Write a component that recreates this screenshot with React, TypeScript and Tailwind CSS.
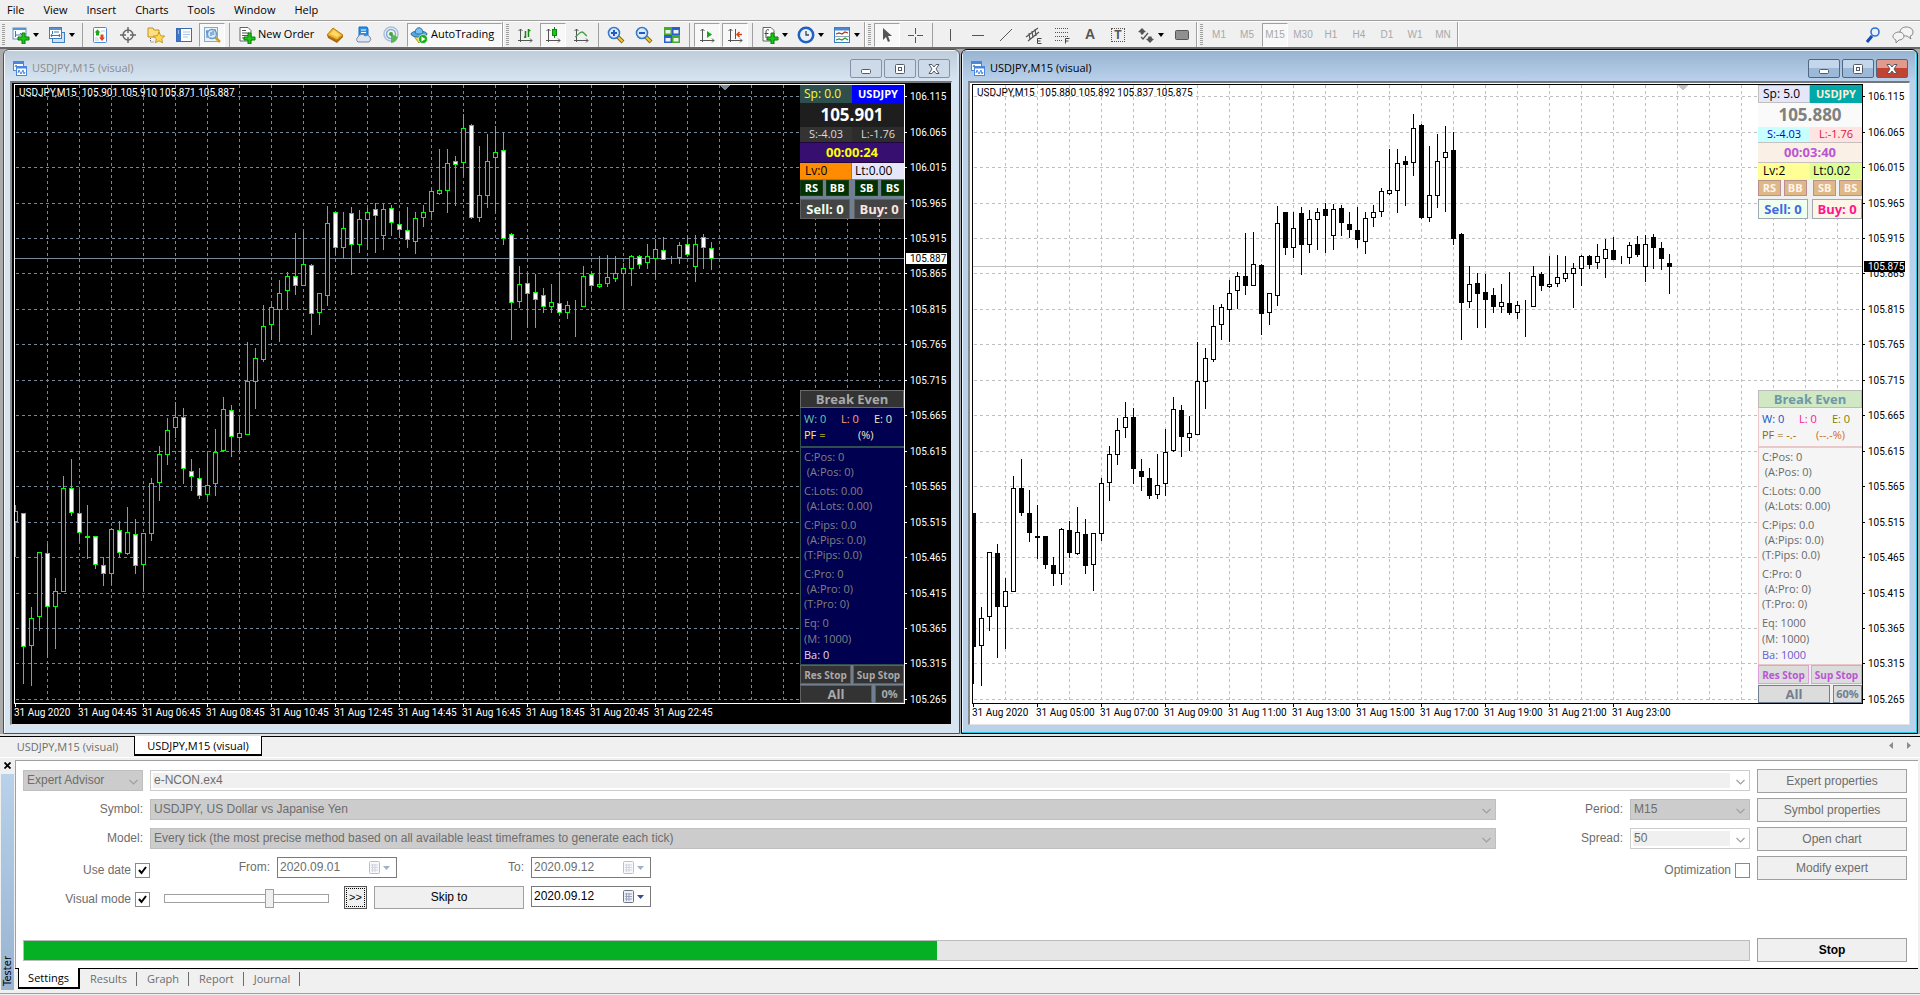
import React from 'react';
import clsx from 'clsx';

// high, body top, body bottom, low, 1 = bullish / 0 = bearish
type Candle = [number, number, number, number, 0 | 1];

const CANDLES: Candle[] = [
  [505, 511, 522, 557, 1], [513, 513, 647, 684, 0], [607, 618, 646, 686, 1], [552, 552, 617, 631, 1],
  [544, 553, 607, 658, 0], [578, 591, 607, 649, 1], [476, 488, 592, 592, 1], [459, 488, 513, 516, 0],
  [490, 513, 533, 542, 0], [505, 536, 538, 559, 1], [536, 536, 565, 569, 0], [557, 565, 574, 586, 0],
  [528, 529, 574, 585, 1], [521, 530, 553, 558, 0], [507, 532, 554, 555, 1], [519, 534, 566, 574, 0],
  [533, 533, 565, 591, 1], [478, 483, 534, 541, 1], [446, 454, 483, 501, 1], [418, 430, 455, 465, 1],
  [402, 417, 428, 438, 1], [408, 417, 469, 484, 0], [459, 471, 477, 491, 0], [468, 478, 496, 499, 0],
  [454, 485, 495, 499, 1], [429, 452, 484, 496, 1], [397, 409, 451, 452, 1], [405, 410, 437, 457, 0],
  [416, 433, 438, 451, 1], [342, 381, 435, 435, 1], [348, 358, 382, 409, 1], [305, 326, 360, 362, 1],
  [304, 307, 325, 340, 1], [280, 293, 310, 342, 1], [272, 276, 291, 309, 1], [233, 276, 286, 295, 0],
  [232, 264, 286, 286, 1], [264, 265, 314, 335, 0], [293, 293, 313, 325, 1], [206, 223, 296, 306, 1],
  [212, 212, 248, 255, 0], [212, 228, 248, 258, 1], [207, 213, 245, 275, 0], [210, 219, 245, 253, 1],
  [208, 212, 220, 250, 1], [203, 209, 216, 253, 0], [204, 209, 236, 250, 1], [205, 208, 223, 236, 0],
  [212, 224, 230, 238, 0], [207, 230, 240, 248, 0], [212, 218, 242, 254, 1], [205, 212, 218, 227, 1],
  [188, 191, 212, 217, 1], [149, 190, 194, 195, 1], [149, 163, 191, 213, 1], [156, 161, 165, 206, 0],
  [114, 128, 163, 176, 1], [124, 125, 218, 219, 0], [146, 195, 218, 222, 1], [134, 161, 196, 208, 1],
  [126, 152, 158, 212, 1], [132, 150, 239, 245, 0], [233, 234, 303, 340, 0], [266, 284, 302, 308, 1],
  [273, 283, 294, 328, 0], [274, 292, 300, 328, 0], [288, 295, 307, 313, 0], [284, 302, 307, 313, 1],
  [272, 303, 313, 315, 0], [301, 305, 313, 319, 1], [300, 305, 306, 337, 1], [266, 276, 307, 307, 1],
  [272, 274, 286, 291, 0], [256, 284, 287, 288, 1], [255, 277, 284, 287, 1], [256, 273, 279, 282, 1],
  [263, 268, 274, 308, 1], [255, 256, 269, 286, 1], [255, 256, 265, 269, 0], [244, 256, 263, 269, 1],
  [239, 249, 259, 278, 1], [237, 250, 260, 260, 0], [256, 259, 260, 264, 1], [242, 245, 258, 264, 1],
  [236, 244, 255, 257, 0], [235, 244, 267, 282, 1], [234, 237, 248, 269, 0], [242, 248, 259, 270, 0],
];

const LEVELS: [number, string][] = [
  [96, '106.115'], [132, '106.065'], [167, '106.015'], [203, '105.965'], [238, '105.915'], [273, '105.865'],
  [309, '105.815'], [344, '105.765'], [380, '105.715'], [415, '105.665'], [451, '105.615'], [486, '105.565'],
  [522, '105.515'], [557, '105.465'], [593, '105.415'], [628, '105.365'], [663, '105.315'], [699, '105.265'],
];

const COLUMNS = Array.from({ length: 27 }, (_, i) => 47 + i * 32);

const CHART_FONT = "text-[10px] font-['Roboto',sans-serif]";

interface Theme {
  dark: boolean;
  bg: string;
  fg: string;
  grid: string;
  line: string;
  up: string;
  down: string;
}

const DARK: Theme = { dark: true, bg: '#000000', fg: '#ffffff', grid: '#778899', line: '#00ff00', up: '#000000', down: '#ffffff' };
const LIGHT: Theme = { dark: false, bg: '#ffffff', fg: '#000000', grid: '#c0c0c0', line: '#000000', up: '#ffffff', down: '#000000' };

const Plot: React.FC<{ theme: Theme; candles: Candle[]; bid: number; times: string[]; title: string }> = ({
  theme,
  candles,
  bid,
  times,
  title,
}) => (
  <svg className="block h-full w-full" shapeRendering="crispEdges">
    <g transform="translate(-12 -83)">
      <g stroke={theme.grid} strokeDasharray="3 3">
        {COLUMNS.map((x) => (
          <line key={x} x1={x + 0.5} x2={x + 0.5} y1="85" y2="703" />
        ))}
        {LEVELS.map(([y]) => (
          <line key={y} x1="16" x2="904" y1={y + 0.5} y2={y + 0.5} />
        ))}
      </g>
      <line x1="15" x2="904" y1={bid + 0.5} y2={bid + 0.5} stroke={theme.grid} />
      <path d="M719 85h11l-5 5h-1z" fill={theme.grid} />
      <g stroke={theme.line}>
        {candles.map(([high, top, bottom, low, up], i) => {
          const x = 15 + i * 8;
          return (
            <g key={i}>
              <line x1={x + 0.5} x2={x + 0.5} y1={high} y2={low} />
              <rect x={x - 1.5} y={top + 0.5} width="4" height={bottom - top - 1} fill={up ? theme.up : theme.down} />
            </g>
          );
        })}
      </g>
      <rect x="12" y="83" width="2" height="621" fill={theme.bg} />
      <path d="M904.5 84.5H14.5V703.5H904.5Z" fill="none" stroke={theme.fg} />
      {times.map((time, i) => (
        <g key={time}>
          <line x1={15.5 + i * 64} x2={15.5 + i * 64} y1="704" y2="707" stroke={theme.fg} />
          <text x={14 + i * 64} y="716" fill={theme.fg} className={CHART_FONT}>
            {time}
          </text>
        </g>
      ))}
      <text x="19" y="96" fill={theme.fg} className={clsx('whitespace-pre', CHART_FONT)}>
        {title}
      </text>
    </g>
  </svg>
);

const PriceScale: React.FC<{ theme: Theme; bid: number; price: string }> = ({ theme, bid, price }) => (
  <svg className="block h-full w-[46px] shrink-0" shapeRendering="crispEdges">
    <g transform="translate(-905 -83)" className={CHART_FONT}>
      {LEVELS.map(([y, label]) => (
        <g key={label}>
          <line x1="905" x2="907" y1={y + 0.5} y2={y + 0.5} stroke={theme.fg} />
          <text x="910" y={y + 4} fill={theme.fg}>
            {label}
          </text>
        </g>
      ))}
      <rect x="906" y={bid - 5} width="41" height="11" fill={theme.fg} />
      <text x="910" y={bid + 4} fill={theme.bg}>
        {price}
      </text>
    </g>
  </svg>
);

interface Quote {
  spread: string;
  price: string;
  timer: string;
  level: string;
  lots: string;
}

const QuotePanel: React.FC<{ dark: boolean; quote: Quote }> = ({ dark, quote }) => {
  const small = clsx(
    'h-4 w-[23px] border text-[11px] leading-[14px] font-bold',
    dark ? 'border-[#1a3a1a] bg-[#003300] text-white' : 'border-[#bc8f8f] bg-[#deb887] text-[#fff5ee]',
  );
  return (
    <div className={clsx('absolute top-[2px] right-px w-[104px]', dark ? 'bg-[#708090]' : 'bg-[#f0f0f0]')}>
      <div className="flex h-[18px] text-[12px] leading-[18px]">
        <span className={clsx('w-[52px] pl-1', dark ? 'bg-[#2f4f4f] text-[#ffff00]' : 'border border-[#c0c0c0] bg-[#e6e6fa] leading-4 text-black')}>
          Sp: {quote.spread}
        </span>
        <span className={clsx('w-[52px] text-center text-[11px] font-bold', dark ? 'bg-[#0000ff] text-white' : 'bg-[#00a9a9] text-[#ffefd5]')}>
          USDJPY
        </span>
      </div>
      <div className={clsx('h-6 text-center text-[17px] leading-6 font-bold', dark ? 'bg-[#1e1e1e] text-white' : 'bg-[#fafafa] text-[#808080]')}>
        {quote.price}
      </div>
      <div className="flex h-[15px] text-center text-[11px] leading-[14px]">
        <span className={clsx('w-[52px]', dark ? 'bg-[#333333] text-[#dcdcdc]' : 'bg-[#c8ffff] text-[#0000cd]')}>S:-4.03</span>
        <span className={clsx('w-[52px]', dark ? 'bg-[#2c2c2c] text-[#dcdcdc]' : 'bg-[#ffe4e1] text-[#dc143c]')}>L:-1.76</span>
      </div>
      <div
        className={clsx(
          'h-[21px] border-y text-center text-[13px] leading-[19px] font-bold',
          dark ? 'border-[#20053f] bg-[#360f70] text-[#ffff00]' : 'border-[#c8c0c0] bg-[#faf0e6] text-[#ba55d3]',
        )}
      >
        {quote.timer}
      </div>
      <div className="flex h-4 text-[12px] leading-4 text-black">
        <span className={clsx('w-[51px] pl-[5px]', dark ? 'bg-[#ff8c00]' : 'bg-[#ffff96]')}>Lv:{quote.level}</span>
        <span className={clsx('ml-px w-[52px] pl-[3px]', dark ? 'bg-[#e6e6fa]' : 'bg-[#dfff96]')}>Lt:{quote.lots}</span>
      </div>
      <div className="flex h-5 justify-between pt-px">
        <button className={small}>RS</button>
        <button className={small}>BB</button>
        <span className="w-px" />
        <button className={small}>SB</button>
        <button className={small}>BS</button>
      </div>
      <div className="flex h-5 justify-between text-[13px] leading-[18px] font-bold">
        <button className={clsx('h-5 w-[50px] border', dark ? 'border-[#606060] bg-[#444444] text-[#f0fff0]' : 'border-[#a0a8b0] bg-[#f0fff0] text-[#4169e1]')}>
          Sell: 0
        </button>
        <button className={clsx('h-5 w-[50px] border', dark ? 'border-[#606060] bg-[#444444] text-[#ffe4e1]' : 'border-[#a0a8b0] bg-[#fff5e6] text-[#ff1493]')}>
          Buy: 0
        </button>
      </div>
    </div>
  );
};

const STATS = [
  ['C:Pos: 0', ' (A:Pos: 0)'],
  ['C:Lots: 0.00', ' (A:Lots: 0.00)'],
  ['C:Pips: 0.0', ' (A:Pips: 0.0)', '(T:Pips: 0.0)'],
  ['C:Pro: 0', ' (A:Pro: 0)', '(T:Pro: 0)'],
];

const StatsPanel: React.FC<{ dark: boolean }> = ({ dark }) => {
  const stop = clsx(
    'h-[19px] w-[51px] border text-[10px] leading-[16px] font-bold whitespace-nowrap',
    dark ? 'border-[#606060] bg-[#333333] text-[#a9a9a9]' : 'border-[#dda0dd] bg-[#dcdcdc] text-[#ba55d3]',
  );
  const foot = dark ? 'border-[#606060] bg-[#333333] text-[#a9a9a9]' : 'border-[#708090] bg-[#dcdcdc] text-[#708090]';
  return (
    <div className={clsx('absolute top-[307px] right-px w-[104px]', dark ? 'bg-[#708090]' : 'bg-[#f0f0f0]')}>
      <button
        className={clsx(
          'block h-[18px] w-full border text-[13px] leading-4 font-bold',
          dark ? 'border-[#696969] bg-[#333333] text-[#a9a9a9]' : 'border-[#bcbcbc] bg-[#d0e8c4] text-[#6c98a8]',
        )}
      >
        Break Even
      </button>
      <div
        className={clsx(
          'h-[257px] border-b border-l pl-[3px] text-[11px] leading-[15px] whitespace-pre',
          dark ? 'border-[#2f4f4f] bg-[#000050] text-[#808080]' : 'border-[#e8c8c8] bg-[#f5f5f5] text-[#696969]',
        )}
      >
        <div className={clsx('-ml-[3px] h-[40px] border-b-2 pt-[3px] pl-[3px]', dark ? 'border-[#2f4f4f]' : 'border-[#e8c8c8]')}>
          <div className="flex">
            <span className={clsx('w-[37px]', dark ? 'text-[#66cdaa]' : 'text-[#1450c8]')}>W: 0</span>
            <span className={clsx('w-[33px]', dark ? 'text-[#ffa07a]' : 'text-[#ff1493]')}>L: 0</span>
            <span className={dark ? 'text-[#eee8cd]' : 'text-[#808000]'}>E: 0</span>
          </div>
          <div className="flex pt-px">
            <span className={clsx('w-[54px]', dark ? 'text-[#ffff00]' : 'text-[#966400]')}>{dark ? 'PF =' : 'PF = -.-'}</span>
            <span className={dark ? 'text-[#f0e6c8]' : 'text-[#d2691e]'}>{dark ? '(%)' : '(--.-%)'}</span>
          </div>
        </div>
        <div className="flex flex-col gap-1 pt-px">
          {STATS.map((group) => (
            <div key={group[0]}>
              {group.map((line) => (
                <p key={line}>{line}</p>
              ))}
            </div>
          ))}
          <div className="leading-4">
            <p>Eq: {dark ? '0' : '1000'}</p>
            <p>(M: 1000)</p>
            <p className={dark ? 'text-[#e6d8f0]' : 'text-[#6a5acd]'}>Ba: {dark ? '0' : '1000'}</p>
          </div>
        </div>
      </div>
      <div className="flex h-5 justify-between">
        <button className={stop}>Res Stop</button>
        <button className={stop}>Sup Stop</button>
      </div>
      <div className="flex h-[18px] justify-between leading-4 font-bold">
        <button className={clsx('h-[18px] w-[72px] border text-[13px]', foot)}>All</button>
        <button className={clsx('h-[18px] w-[29px] border text-[11px]', foot)}>{dark ? '0%' : '60%'}</button>
      </div>
    </div>
  );
};

const ChartDocIcon: React.FC = () => (
  <svg width="14" height="15" viewBox="0 0 14 15" fill="none" stroke="#4a86e0">
    <rect x=".5" y=".5" width="10" height="9" fill="#fff" />
    <path d="M.5 2h10" strokeWidth="2" />
    <path d="M2 6l1-2 2 3 1-2" />
    <rect x="3.5" y="5.5" width="10" height="9" fill="#fff" />
    <path d="M3.500 6.500h10" strokeWidth="2" />
    <path d="M5 12l1-3 2 4 2-4 1 4 1-2" />
  </svg>
);

interface WindowProps {
  active?: boolean;
  theme: Theme;
  candles: Candle[];
  bid: number;
  price: string;
  times: string[];
  title: string;
  quote: Quote;
}

const ChartWindow: React.FC<WindowProps> = ({ active, theme, candles, bid, price, times, title, quote }) => {
  const control = clsx(
    'flex h-[19px] w-8 items-center justify-center rounded-[2px] border',
    active ? 'border-[#4f6785] bg-linear-to-b from-[#c3d6ea] from-50% to-[#9db9d8] to-50%' : 'border-[#8592a5] bg-[#ccdae9]',
  );
  return (
    <section
      className={clsx(
        'flex min-w-0 flex-1 flex-col rounded-t-md border pr-[7px] pb-2 pl-[6px]',
        active
          ? 'border-black bg-[#b9d1ea] shadow-[inset_-1px_-1px_0_#22c8e0,inset_1px_1px_0_#eaf4ff]'
          : 'border-[#505050] bg-[#d7e4f2] shadow-[inset_1px_1px_0_#f4f8fc]',
      )}
    >
      <header
        className={clsx(
          '-mx-[5px] mt-px flex h-[30px] items-center gap-[5px] bg-linear-to-b pt-1 pr-[7px] pl-[8px]',
          active ? 'from-[#99b4d1] to-[#b9d1ea] text-black' : 'from-[#bfcddb] to-[#d7e4f2] text-[#8c8c8c]',
        )}
      >
        <ChartDocIcon />
        <h2 className="flex-1 text-[11px]">USDJPY,M15 (visual)</h2>
        <div className="flex gap-[2px] self-start pt-[4px]">
          <button className={control} aria-label="Minimize">
            <svg width="12" height="12" viewBox="0 0 12 12">
              <rect x="1.500" y="6.500" width="9" height="4" rx="1" fill="#fff" stroke="#555b66" />
            </svg>
          </button>
          <button className={control} aria-label="Restore">
            <svg width="12" height="12" viewBox="0 0 12 12" fill="#fff" stroke="#555b66">
              <rect x="1.500" y="1.500" width="9" height="9" rx="1" />
              <rect x="4.500" y="4.500" width="3" height="3" />
            </svg>
          </button>
          <button
            className={clsx(control, active && 'border-[#4a0f14] from-[#e29a8c]! to-[#c04434]!')}
            aria-label="Close"
          >
            <svg width="12" height="12" viewBox="0 0 12 12">
              <path d="M1 1.500h3l2 2.500 2-2.500h3L8 6l3 4.500H8L6 8l-2 2.500H1L4 6z" fill="#fff" stroke="#555b66" />
            </svg>
          </button>
        </div>
      </header>
      <div
        className={clsx(
          'flex min-h-[643px] flex-1 border-t-2 border-r border-b border-l-2 border-t-[#777] border-r-[#e3e3e3] border-b-[#e3e3e3] border-l-[#8a8a8a]',
          theme.dark ? 'bg-black' : 'bg-white',
        )}
      >
        <div className="relative min-w-0 flex-1 overflow-hidden">
          <Plot theme={theme} candles={candles} bid={bid} times={times} title={title} />
          <QuotePanel dark={theme.dark} quote={quote} />
          <StatsPanel dark={theme.dark} />
        </div>
        <PriceScale theme={theme} bid={bid} price={price} />
      </div>
    </section>
  );
};

const Icon: React.FC<{ children: React.ReactNode }> = ({ children }) => (
  <svg width="18" height="18" viewBox="0 0 18 18" fill="none" className="shrink-0">
    {children}
  </svg>
);

const Caret: React.FC = () => (
  <svg width="6" height="4" viewBox="0 0 6 4">
    <path d="M0 0h6L3 4z" fill="#000" />
  </svg>
);

const Grip: React.FC = () => (
  <div className="mx-[2px] h-[22px] w-[3px] bg-[repeating-linear-gradient(to_bottom,#a0a0a0_0,#a0a0a0_1px,transparent_1px,transparent_2px)]" />
);

const Divider: React.FC = () => <div className="mx-[3px] h-[24px] w-px bg-[#a0a0a0]" />;

const Edge: React.FC = () => <div className="h-[26px] w-[2px] border-l border-[#a0a0a0] bg-white" />;

const Tool: React.FC<{ label: string; pressed?: boolean; menu?: boolean; children: React.ReactNode }> = ({
  label,
  pressed,
  menu,
  children,
}) => (
  <button
    aria-label={label}
    className={clsx(
      'flex h-6 shrink-0 items-center justify-center',
      menu ? 'w-9 gap-[3px]' : pressed ? 'mx-px w-[26px]' : 'w-7',
      pressed && 'border border-t-[#a0a0a0] border-r-white border-b-white border-l-[#a0a0a0] bg-[#f8f8f8]',
    )}
  >
    {children}
    {menu && <Caret />}
  </button>
);

const PLUS = 'M10 7h3v4h4v3h-4v4h-3v-4H6v-3h4z';
const AXES = 'M4.500 3v13M2 14.500h14M2.500 5l2-2 2 2M14 12.500l2 2-2 2';

const Magnifier: React.FC<{ plus?: boolean }> = ({ plus }) => (
  <Icon>
    <path d="M10 10l6 6" stroke="#8a6a10" strokeWidth="4" />
    <path d="M10.500 10.500l5 5" stroke="#f0c840" strokeWidth="2" />
    <circle cx="7" cy="7" r="5.500" fill="#d8ecfc" stroke="#3878c8" strokeWidth="1.600" />
    <path d={plus ? 'M4 7h6M7 4v6' : 'M4 7h6'} stroke="#2858c0" strokeWidth="2" />
  </Icon>
);

const Toolbar: React.FC = () => (
  <div role="toolbar" className="flex h-[27px] items-center border-t border-[#a0a0a0] bg-[#f0f0f0] pt-px shadow-[inset_0_1px_0_#fff]">
    <Grip />
    <Tool label="New chart" menu>
      <Icon>
        <rect x="1" y="2" width="13" height="11" fill="#fff" stroke="#5a94d0" />
        <path d="M1 3h13" stroke="#5a94d0" strokeWidth="2" />
        <path d="M3.500 5v6M3 9h6M8 7l2 2" stroke="#3878b8" />
        <path d={PLUS} fill="#18c818" stroke="#0a7a0a" />
      </Icon>
    </Tool>
    <Tool label="Profiles" menu>
      <Icon>
        <rect x="4.500" y="6.500" width="12" height="10" fill="#cfe2f6" stroke="#3f7fc0" />
        <rect x="1.500" y="1.500" width="12" height="11" fill="#fff" stroke="#3f7fc0" />
        <path d="M2 3h11" stroke="#5a94d0" strokeWidth="2" />
        <path d="M4.500 5v3M3 9.500h9M4 8l-1 1.500L4 11M11 8l1 1.500L11 11M6 6h5" stroke="#3878b8" />
      </Icon>
    </Tool>
    <Divider />
    <Tool label="Market Watch">
      <Icon>
        <rect x="2.500" y="1.500" width="13" height="15" rx="1" fill="#fff" stroke="#4a8ad8" />
        <path d="M6.500 3.500l3 3H8v3H5v-3H3.500z" fill="#18a818" />
        <path d="M11 15l-3-3.500h1.500v-3h3v3H14z" fill="#e04818" />
        <path d="M10 5h4M4 12h3M4 14h4" stroke="#b8cce4" />
      </Icon>
    </Tool>
    <Tool label="Data Window">
      <Icon>
        <circle cx="9" cy="9" r="5" stroke="#666" strokeWidth="1.400" />
        <path d="M9 1v6M9 11v6M1 9h6M11 9h6" stroke="#666" strokeWidth="1.400" />
      </Icon>
    </Tool>
    <Tool label="Navigator">
      <Icon>
        <path d="M1 2h5l1 2h5v7H1z" fill="#ffe080" stroke="#c09020" />
        <path d="M3.500 12v4h4" stroke="#666" strokeDasharray="1 1" />
        <path d="M12 6l1.700 3.700 4 .4-3 2.700.9 4-3.600-2-3.600 2 .9-4-3-2.700 4-.4z" fill="#ffd850" stroke="#b88810" strokeWidth=".8" />
      </Icon>
    </Tool>
    <Tool label="Terminal">
      <Icon>
        <rect x="1.500" y="2.500" width="15" height="13" fill="#fff" stroke="#3a6ab0" />
        <rect x="2" y="3" width="4" height="12" fill="#3a78d0" />
        <path d="M8 6h7M8 8.500h7M8 11h5" stroke="#a8c4e8" />
        <path d="M3 5h1M3 7h1" stroke="#fff" />
      </Icon>
    </Tool>
    <Tool label="Strategy Tester" pressed>
      <Icon>
        <rect x="1.500" y="1.500" width="13" height="14" fill="#e8f2fc" stroke="#8aa8c8" />
        <path d="M4 4v8M3 6h2M12 3v6" stroke="#3a78b8" />
        <path d="M12 11l5 5" stroke="#d0a020" strokeWidth="2.500" />
        <circle cx="9" cy="8" r="4.500" fill="#d0e8fc" fillOpacity=".7" stroke="#6898c8" strokeWidth="1.300" />
        <path d="M8 6v4M10 5v4" stroke="#3a78b8" />
      </Icon>
    </Tool>
    <Divider />
    <button className="flex h-6 w-[88px] items-center gap-[2px] pl-[5px] text-[11px] whitespace-nowrap">
      <Icon>
        <path d="M2 1.500h8l3 3V15H2z" fill="#fff" stroke="#666" />
        <path d="M4 4.500h4M4 7h7M4 9.500h7M4 12h4" stroke="#555" />
        <path d={PLUS} fill="#18c818" stroke="#0a7a0a" />
      </Icon>
      New Order
    </button>
    <Tool label="MetaEditor">
      <Icon>
        <path d="M1 9l1 3 9 5 6-6V9z" fill="#a86c10" />
        <path d="M7 2l10 7-6 5-10-5z" fill="#f0b830" stroke="#b87c18" />
        <path d="M8 4l6 5-3 2-7-3z" fill="#ffd868" />
      </Icon>
    </Tool>
    <Tool label="Virtual Hosting">
      <Icon>
        <path d="M5 1h8l1 2v7H5z" fill="#2890e8" stroke="#1868b8" />
        <path d="M7 4h5M7 6.500h5" stroke="#fff" />
        <path d="M4 16a3 3 0 010-5 4 4 0 017-1 3 3 0 014 6z" fill="#dce4f0" stroke="#7888a0" />
      </Icon>
    </Tool>
    <Tool label="Signals">
      <Icon>
        <circle cx="9" cy="8" r="7" stroke="#a8c0e0" strokeWidth="1.500" />
        <circle cx="9" cy="8" r="4.500" stroke="#88a8d0" strokeWidth="1.500" />
        <path d="M9 8v9a8 8 0 007-6z" fill="#58b858" />
        <circle cx="9" cy="8" r="2" fill="#38a838" />
      </Icon>
    </Tool>
    <button className="ml-[2px] flex h-6 w-[95px] items-center gap-[3px] border border-t-[#a0a0a0] border-r-white border-b-white border-l-[#a0a0a0] bg-[#f8f8f8] pl-[2px] text-[11px] whitespace-nowrap">
      <Icon>
        <path d="M3 9l6 8 6-8z" fill="#f8d840" stroke="#b89820" />
        <ellipse cx="9" cy="8" rx="8" ry="3" fill="#58a8e0" stroke="#2870a8" />
        <path d="M5 7c0-7 8-7 8 0-2 1.500-6 1.500-8 0z" fill="#78c0f0" stroke="#2870a8" />
        <circle cx="13" cy="13" r="4.500" fill="#18b018" stroke="#fff" strokeWidth=".6" />
        <path d="M11.500 10.500l4 2.500-4 2.500z" fill="#fff" />
      </Icon>
      AutoTrading
    </button>
    <Edge />
    <Grip />
    <Tool label="Bar Chart">
      <Icon>
        <path d={AXES} stroke="#555" />
        <path d="M9.500 5v7M12.500 3v8M12.500 4.500h2M8 11h2" stroke="#108810" strokeWidth="1.500" />
      </Icon>
    </Tool>
    <Tool label="Candlesticks" pressed>
      <Icon>
        <path d={AXES} stroke="#555" />
        <path d="M10.500 1v11" stroke="#108810" />
        <rect x="8.500" y="3.500" width="4" height="6" fill="#18c818" stroke="#108810" />
      </Icon>
    </Tool>
    <Tool label="Line Chart">
      <Icon>
        <path d={AXES} stroke="#555" />
        <path d="M3 11c3-1 4-5 7-5 2 0 3 3 5 4" stroke="#48a048" strokeWidth="1.300" />
      </Icon>
    </Tool>
    <Divider />
    <Tool label="Zoom In">
      <Magnifier plus />
    </Tool>
    <Tool label="Zoom Out">
      <Magnifier />
    </Tool>
    <Tool label="Tile Windows">
      <Icon>
        <path d="M1 1h8v8H1zM9 9h8v8H9z" fill="#48a828" />
        <path d="M9 1h8v8H9zM1 9h8v8H1z" fill="#2860c8" />
        <path d="M2.500 4h5v3.500h-5zM10.500 4h5v3.500h-5zM2.500 12h5v3.500h-5zM10.500 12h5v3.500h-5z" fill="#e8f0f8" />
      </Icon>
    </Tool>
    <Divider />
    <Tool label="Auto Scroll" pressed>
      <Icon>
        <path d={AXES} stroke="#555" />
        <path d="M9 5l5 3.500L9 12z" fill="#18a818" />
      </Icon>
    </Tool>
    <Tool label="Chart Shift" pressed>
      <Icon>
        <path d={AXES} stroke="#555" />
        <path d="M9.500 3v10" stroke="#555" />
        <path d="M16 8.500h-5M13.500 6L11 8.500l2.500 2.500" stroke="#d04818" strokeWidth="1.500" />
      </Icon>
    </Tool>
    <Divider />
    <Tool label="Indicators" menu>
      <Icon>
        <path d="M2 1.500h8l3 3V15H2z" fill="#fff" stroke="#666" />
        <path d="M8 4c-2-1-3 0-3 2v6M3.500 7.500h4" stroke="#444" />
        <path d={PLUS} fill="#18c818" stroke="#0a7a0a" />
      </Icon>
    </Tool>
    <Tool label="Periods" menu>
      <Icon>
        <circle cx="9" cy="9" r="7.200" fill="#e8f2fc" stroke="#2060c0" strokeWidth="2.500" />
        <path d="M9 5v4h3" stroke="#444" strokeWidth="1.300" />
      </Icon>
    </Tool>
    <Tool label="Templates" menu>
      <Icon>
        <rect x="1.500" y="1.500" width="15" height="15" fill="#fff" stroke="#3a78c0" />
        <path d="M2 3h14" stroke="#4888d8" strokeWidth="3" />
        <path d="M3 8l3-1 3 1 3-2 3 1" stroke="#a83818" strokeWidth="1.200" />
        <path d="M2 10.500h14" stroke="#88a8c8" />
        <path d="M3 14l3-1 3 1 3-2 3 2" stroke="#289828" strokeWidth="1.200" />
      </Icon>
    </Tool>
    <Edge />
    <Grip />
    <Tool label="Cursor" pressed>
      <Icon>
        <path d="M5 2v12l3-3 2 5 2-1-2-5h4z" fill="#555" />
      </Icon>
    </Tool>
    <Tool label="Crosshair">
      <Icon>
        <path d="M9.500 2v6M9.500 11v6M2 9.500h6M11 9.500h6" stroke="#555" />
      </Icon>
    </Tool>
    <Divider />
    <Tool label="Vertical Line">
      <Icon>
        <path d="M9.500 3v12" stroke="#555" />
      </Icon>
    </Tool>
    <Tool label="Horizontal Line">
      <Icon>
        <path d="M3 9.500h12" stroke="#555" />
      </Icon>
    </Tool>
    <Tool label="Trendline">
      <Icon>
        <path d="M3 15L15 3" stroke="#555" />
      </Icon>
    </Tool>
    <Tool label="Equidistant Channel">
      <Icon>
        <path d="M1 11L13 2M3 15L14 6M4 7l1 7M7 5l1 7M10 3l1 7" stroke="#555" strokeWidth="1.200" />
        <path d="M16.500 12.500h-4v5h4M12.500 15h3" stroke="#444" />
      </Icon>
    </Tool>
    <Tool label="Fibonacci">
      <Icon>
        <path d="M2 2.500h13M2 6.500h13M2 10.500h13M2 14.500h8" stroke="#555" strokeDasharray="1 1" />
        <path d="M16.500 12.500h-4v5M12.500 15h3" stroke="#444" />
      </Icon>
    </Tool>
    <Tool label="Text">
      <span className="font-['Liberation_Sans'] text-[14px] font-bold text-[#555]">A</span>
    </Tool>
    <Tool label="Text Label">
      <span className="flex h-[14px] w-[14px] items-center justify-center border border-dotted border-[#555] font-['Liberation_Sans'] text-[12px] font-bold text-[#555]">
        T
      </span>
    </Tool>
    <Tool label="Arrows" menu>
      <Icon>
        <path d="M5 2l4 4-2 .5-1 2H4l-.5-2L1 6zM13 17l-4-4 2-.5.5-2h3l.5 2 2 .5z" fill="#555" />
        <path d="M4 11l2 2 5-6" stroke="#555" strokeWidth="1.300" />
      </Icon>
    </Tool>
    <Tool label="Shapes">
      <Icon>
        <rect x="2.500" y="4.500" width="13" height="9" rx="1" fill="#909090" stroke="#555" />
      </Icon>
    </Tool>
    <Edge />
    <Grip />
    {['M1', 'M5', 'M15', 'M30', 'H1', 'H4', 'D1', 'W1', 'MN'].map((period) => (
      <Tool key={period} label={period} pressed={period === 'M15'}>
        <span className="font-['Liberation_Sans'] text-[10px] text-[#a8a8a8]">{period}</span>
      </Tool>
    ))}
    <Edge />
    <div className="ml-auto flex pr-[3px]">
      <Tool label="Search">
        <Icon>
          <path d="M6 10l-5 6" stroke="#1848b8" strokeWidth="3" />
          <circle cx="9" cy="6" r="4" fill="#e8f2ff" stroke="#3070d8" strokeWidth="1.600" />
        </Icon>
      </Tool>
      <Tool label="Community">
        <svg width="22" height="18" viewBox="0 0 22 18" fill="#f4f4f4" stroke="#888">
          <path d="M14 1c4 0 7 2 7 5s-2 4-3 4l1 3-4-3c-4 0-7-1-7-4s3-5 6-5z" />
          <path d="M7 6c3 0 5 2 5 4s-2 4-5 4l-3 3v-3c-2-1-3-2-3-4s3-4 6-4z" />
        </svg>
      </Tool>
    </div>
  </div>
);

const Chevron: React.FC = () => (
  <svg width="9" height="6" viewBox="0 0 9 6" fill="none" className="pointer-events-none absolute top-[8px] right-[4px]">
    <path d="M.5 1l4 4 4-4" stroke="#a0a0a0" strokeWidth="1.200" />
  </svg>
);

const Pick: React.FC<{ id: string; value: string; label?: string; className: string }> = ({ id, value, label, className }) => (
  <div className={clsx('relative h-[21px] border border-[#bfbfbf] bg-[#cccccc]', className)}>
    <select id={id} aria-label={label} disabled className="h-full w-full appearance-none pl-[3px] text-[#6d6d6d] opacity-100">
      <option>{value}</option>
    </select>
    <Chevron />
  </div>
);

const Combo: React.FC<{ id: string; value: string; label?: string; className: string }> = ({ id, value, label, className }) => (
  <div className={clsx('relative h-[21px] border border-[#cccccc] bg-white py-[2px] pr-[19px] pl-[2px]', className)}>
    <input id={id} aria-label={label} disabled defaultValue={value} className="block h-[15px] w-full bg-[#f0f0f0] px-px text-[#6d6d6d]" />
    <Chevron />
  </div>
);

const DateBox: React.FC<{ id: string; value: string; label?: string; disabled?: boolean }> = ({ id, value, label, disabled }) => (
  <div className="flex h-[21px] w-[120px] items-center border border-[#7a7a7a] bg-white pr-[6px] pl-[2px]">
    <input
      id={id}
      aria-label={label}
      disabled={disabled}
      defaultValue={value}
      className={clsx('w-0 min-w-0 flex-1', disabled ? 'text-[#6d6d6d]' : 'text-black')}
    />
    <svg width="21" height="14" viewBox="0 0 21 14" fill="none" opacity={disabled ? 0.45 : 1}>
      <rect x=".5" y=".5" width="10" height="12" rx="1" fill="#eef0f6" stroke="#707488" />
      <path d="M2 4h7M2 6.500h7M2 9h7M3.500 3v8M6 3v8" stroke="#9aa4bc" />
      <path d="M14 5h7l-3.500 4z" fill="#34508c" />
    </svg>
  </div>
);

const Check: React.FC<{ id: string; label: string; checked?: boolean; disabled?: boolean; className?: string }> = ({
  id,
  label,
  checked,
  disabled,
  className,
}) => (
  <div className={clsx('flex h-[21px] items-end justify-end gap-[4px]', className)}>
    <label htmlFor={id}>{label}</label>
    <span className="relative h-[15px] w-[15px]">
      <input
        id={id}
        type="checkbox"
        defaultChecked={checked}
        disabled={disabled}
        className="peer block h-[15px] w-[15px] appearance-none border border-[#8a8a8a] bg-white"
      />
      <svg width="9" height="9" viewBox="0 0 9 9" fill="none" className="pointer-events-none absolute top-[3px] left-[3px] hidden peer-checked:block">
        <path d="M1 4l2.500 3L8 1" stroke="#000" strokeWidth="2" />
      </svg>
    </span>
  </div>
);

const Tester: React.FC = () => {
  const action = 'h-6 w-full border border-[#a0a0a0] bg-[#f0f0f0]';
  return (
    <div className="flex pr-[2px] pb-[3px]">
      <aside className="flex w-[15px] flex-col items-center">
        <button aria-label="Close tester" className="mb-1 flex h-[10px] w-full items-center justify-center">
          <svg width="7" height="7" viewBox="0 0 7 7">
            <path d="M.5 .5l6 6M6.500 .5l-6 6" stroke="#000" strokeWidth="1.800" />
          </svg>
        </button>
        <div className="flex w-[13px] flex-1 items-end justify-center bg-linear-to-b from-[#b9d1ea] to-[#99b4d1] pb-1">
          <span className="rotate-180 font-['DejaVu_Sans'] text-[10px] leading-[13px] [writing-mode:vertical-rl]">Tester</span>
        </div>
      </aside>
      <div className="flex min-w-0 flex-1 flex-col">
        <form
          className="flex h-[208px] flex-col border-t border-l border-[#a0a0a0] bg-white pt-2 pr-[11px] pl-[7px] font-['Liberation_Sans',sans-serif] text-[12px] leading-[15px] text-[#6d6d6d]"
          onSubmit={(e) => e.preventDefault()}
        >
          <div className="flex gap-[7px]">
            <div className="flex min-w-0 flex-1 flex-col gap-2 pt-px">
              <div className="flex gap-[7px]">
                <Pick id="kind" label="Tester type" value="Expert Advisor" className="w-[120px]" />
                <Combo id="expert" label="Expert" value="e-NCON.ex4" className="flex-1" />
              </div>
              <div className="flex items-center gap-[7px]">
                <label htmlFor="symbol" className="w-[120px] text-right">Symbol:</label>
                <Pick id="symbol" value="USDJPY, US Dollar vs Japanise Yen" className="flex-1" />
                <label htmlFor="period" className="w-[120px] text-right">Period:</label>
                <Pick id="period" value="M15" className="w-[120px]" />
              </div>
              <div className="flex items-center gap-[7px]">
                <label htmlFor="model" className="w-[120px] text-right">Model:</label>
                <Pick
                  id="model"
                  value="Every tick (the most precise method based on all available least timeframes to generate each tick)"
                  className="flex-1"
                />
                <label htmlFor="spread" className="w-[120px] text-right">Spread:</label>
                <Combo id="spread" value="50" className="w-[120px]" />
              </div>
              <div className="flex items-center">
                <Check id="use-date" label="Use date" checked className="w-[127px]" />
                <label htmlFor="from" className="mr-[7px] w-[120px] text-right">From:</label>
                <DateBox id="from" value="2020.09.01" disabled />
                <label htmlFor="to" className="mr-[7px] w-[127px] text-right">To:</label>
                <DateBox id="to" value="2020.09.12" disabled />
                <Check id="optimization" label="Optimization" disabled className="ml-auto" />
              </div>
              <div className="flex items-start">
                <Check id="visual" label="Visual mode" checked className="w-[127px]" />
                <input
                  type="range"
                  aria-label="Visual mode speed"
                  defaultValue="65"
                  className="mt-[3px] ml-[14px] h-[19px] w-[165px] appearance-none bg-transparent [&::-webkit-slider-runnable-track]:h-[9px] [&::-webkit-slider-runnable-track]:border [&::-webkit-slider-runnable-track]:border-[#a0a0a0] [&::-webkit-slider-runnable-track]:bg-white [&::-webkit-slider-thumb]:-mt-[6px] [&::-webkit-slider-thumb]:h-[19px] [&::-webkit-slider-thumb]:w-[9px] [&::-webkit-slider-thumb]:appearance-none [&::-webkit-slider-thumb]:border [&::-webkit-slider-thumb]:border-[#a0a0a0] [&::-webkit-slider-thumb]:bg-[#f0f0f0]"
                />
                <button className="ml-[15px] h-[23px] w-[23px] border border-[#555] bg-[#f0f0f0] p-px text-black">
                  <span className="flex h-full items-center justify-center border border-dotted border-black text-[11px]">&gt;&gt;</span>
                </button>
                <button className="mr-[7px] ml-[7px] h-[23px] w-[150px] border border-[#a0a0a0] bg-[#f0f0f0] text-black">Skip to</button>
                <DateBox id="skip-date" label="Skip to date" value="2020.09.12" />
              </div>
            </div>
            <div className="flex w-[150px] flex-col gap-[5px]">
              <button disabled className={action}>Expert properties</button>
              <button disabled className={action}>Symbol properties</button>
              <button disabled className={action}>Open chart</button>
              <button disabled className={action}>Modify expert</button>
            </div>
          </div>
          <div className="mt-auto flex items-center gap-[7px] pb-[6px]">
            <div role="progressbar" aria-label="Test progress" aria-valuenow={53} className="h-[21px] flex-1 border border-[#bcbcbc] bg-[#e6e6e6]">
              <div className="h-full bg-[#06b025]" style={{ width: '52.9%' }} />
            </div>
            <button className="h-6 w-[150px] border border-[#a0a0a0] bg-[#f0f0f0] font-bold text-black">Stop</button>
          </div>
        </form>
        <nav className="flex h-[22px] items-start border-t border-black bg-[#f0f0f0] pl-[3px] text-[11px] leading-[18px]">
          <button className="-mt-px h-[21px] w-[62px] border-r-2 border-b-2 border-l border-black bg-white">Settings</button>
          {['Results', 'Graph', 'Report', 'Journal'].map((tab) => (
            <button key={tab} className="flex h-5 items-center pl-[10px] text-[#6d6d6d]">
              {tab}
              <span className="ml-[9px] h-[14px] w-px bg-[#6d6d6d]" />
            </button>
          ))}
        </nav>
      </div>
    </div>
  );
};

const App: React.FC = () => (
  <div className="flex min-h-screen flex-col bg-[#f0f0f0] font-['Open_Sans',sans-serif] text-black">
    <nav className="flex h-5 items-center gap-[19px] pl-[7px] text-[11px]">
      {['File', 'View', 'Insert', 'Charts', 'Tools', 'Window', 'Help'].map((item) => (
        <button key={item}>{item}</button>
      ))}
    </nav>
    <Toolbar />
    <main className="flex flex-1 gap-px border-t-2 border-b-2 border-t-[#696969] border-b-[#e3e3e3] bg-[#ababab] pr-[2px] pl-[3px]">
      <ChartWindow
        theme={DARK}
        candles={CANDLES}
        bid={258}
        price="105.887"
        title="USDJPY,M15  105.901 105.910 105.871 105.887"
        times={[
          '31 Aug 2020', '31 Aug 04:45', '31 Aug 06:45', '31 Aug 08:45', '31 Aug 10:45', '31 Aug 12:45',
          '31 Aug 14:45', '31 Aug 16:45', '31 Aug 18:45', '31 Aug 20:45', '31 Aug 22:45',
        ]}
        quote={{ spread: '0.0', price: '105.901', timer: '00:00:24', level: '0', lots: '0.00' }}
      />
      <ChartWindow
        active
        theme={LIGHT}
        candles={[...CANDLES.slice(1), [254, 263, 267, 294, 0]]}
        bid={266}
        price="105.875"
        title="USDJPY,M15  105.880 105.892 105.837 105.875"
        times={[
          '31 Aug 2020', '31 Aug 05:00', '31 Aug 07:00', '31 Aug 09:00', '31 Aug 11:00', '31 Aug 13:00',
          '31 Aug 15:00', '31 Aug 17:00', '31 Aug 19:00', '31 Aug 21:00', '31 Aug 23:00',
        ]}
        quote={{ spread: '5.0', price: '105.880', timer: '00:03:40', level: '2', lots: '0.02' }}
      />
    </main>
    <nav className="mb-[2px] flex h-[22px] items-start border-t border-b border-t-black border-b-white pl-px text-[11px] leading-[17px]">
      <button className="h-[19px] w-[133px] text-[#6d6d6d]">USDJPY,M15 (visual)</button>
      <button className="-mt-px h-[20px] w-[128px] border-x border-b-2 border-black bg-white">USDJPY,M15 (visual)</button>
      <div className="ml-auto flex gap-[14px] pt-[5px] pr-[9px]">
        <button aria-label="Previous tab">
          <svg width="4" height="7" viewBox="0 0 4 7"><path d="M4 0v7L0 3.500z" fill="#8c8c8c" /></svg>
        </button>
        <button aria-label="Next tab">
          <svg width="4" height="7" viewBox="0 0 4 7"><path d="M0 0v7l4-3.500z" fill="#8c8c8c" /></svg>
        </button>
      </div>
    </nav>
    <Tester />
    <div className="h-[2px] border-t border-[#a0a0a0]" />
  </div>
);

export default App;
